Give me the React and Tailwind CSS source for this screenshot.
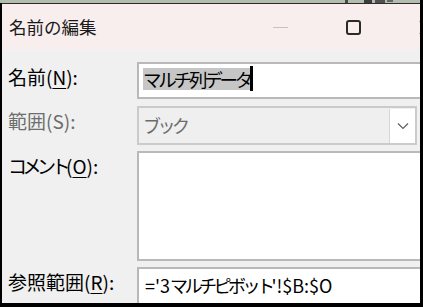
import React from 'react';

const font = "font-['Noto_Sans_CJK_JP','Noto_Sans',sans-serif]";

const Key = ({ children }) => (
  <span className="underline decoration-1 underline-offset-[3px]">{children}</span>
);

// katakana in the reference font sit much tighter than Noto's full-width ones
const Kana = ({ children, className = 'tracking-[-4.5px]' }) => (
  <span className={className}>{children}</span>
);

const Label = ({ children, muted }) => (
  <div
    className={`w-[135px] shrink-0 pl-[6px] pt-[2px] text-[19px] leading-[26px] ${
      muted ? 'text-[#6d6d6d]' : 'text-black'
    }`}
  >
    {children}
  </div>
);

export default function App() {
  return (
    <div className={`w-[423px] h-[307px] bg-black flex flex-col overflow-hidden ${font}`}>
      {/* bit of the sheet behind the dialog */}
      <div className="h-[3px] mr-[3px] bg-[#b3bdae] flex items-start">
        <span className="ml-[345px] w-[3px] h-[3px] bg-[#4a4a4a]" />
        <span className="ml-[16px] w-[8px] h-[3px] bg-[#3c3c3c]" />
        <span className="ml-[3px] w-[10px] h-[3px] bg-[#505050]" />
        <span className="ml-[2px] w-[6px] h-[2px] bg-[#666]" />
      </div>

      <div className="flex-1 ml-[2px] mr-[3px] mb-[4px] flex flex-col overflow-hidden border-t border-[#2b2b2b]">
        {/* title bar */}
        <div className="h-[46px] shrink-0 bg-[#f9eeee] flex items-center mr-[-43px]">
          <div className="flex-1 pl-[7px] text-[17.5px] text-[#1a1a1a]">名前の編集</div>
          <div className="w-[73px] shrink-0 flex justify-center">
            <span className="w-[15px] h-[1px] bg-[#c9c1c1]" />
          </div>
          <div className="w-[73px] shrink-0 flex justify-center">
            <span className="w-[15px] h-[15px] border-2 border-[#2a2a2a] rounded-[3px]" />
          </div>
          <div className="w-[73px] shrink-0 flex justify-center">
            <svg width="15" height="15" viewBox="0 0 15 15">
              <path d="M1 1 L14 14 M14 1 L1 14" stroke="#2a2a2a" strokeWidth="1.6" />
            </svg>
          </div>
        </div>

        {/* form */}
        <div className="flex-1 bg-[#f0f0f0] pt-[12px] flex flex-col">
          <div className="flex items-start">
            <Label>
              名前(<Key>N</Key>):
            </Label>
            <div className="flex-1 mr-[-4px] h-[37px] bg-white border-2 border-[#b9b9b9] pl-[4px] pt-[2px] flex items-start">
              <span className="inline-block mt-[2px] bg-[#c6c6c6] text-[18.5px] leading-[22px] tracking-[-3.2px] text-black">
                マルチ列データ
              </span>
              <span className="inline-block w-[3px] h-[25px] bg-black" />
            </div>
          </div>

          <div className="flex items-start mt-[7px]">
            <Label muted>範囲(S):</Label>
            <div className="w-[280px] h-[39px] bg-[#efefef] border-2 border-[#cbcbcb] flex items-center">
              <span className="flex-1 pl-[4px] text-[18px] tracking-[-3.5px] text-[#6d6d6d]">ブック</span>
              <div className="w-[26px] h-[34px] bg-white border-l border-[#d6d6d6] flex items-center justify-center">
                <svg width="12" height="8" viewBox="0 0 12 8">
                  <path d="M1 1.5 L6 6.5 L11 1.5" fill="none" stroke="#606060" strokeWidth="1.2" />
                </svg>
              </div>
            </div>
          </div>

          <div className="flex items-start mt-[6px]">
            <Label>
              <Kana>コメント</Kana>(<Key>O</Key>):
            </Label>
            <div className="flex-1 mr-[-4px] h-[110px] bg-white border-2 border-[#b9b9b9]" />
          </div>

          <div className="flex items-start mt-[6px]">
            <Label>
              参照範囲(<Key>R</Key>):
            </Label>
            <div className="flex-1 mr-[-4px] h-[40px] bg-white border-2 border-[#b9b9b9] pl-[6px] pt-[3px] text-[18px] leading-[26px] text-black">
              ='3<Kana className="tracking-[-3.5px]">マルチピボット</Kana>'!$B:$O
            </div>
          </div>
        </div>
      </div>
    </div>
  );
}
